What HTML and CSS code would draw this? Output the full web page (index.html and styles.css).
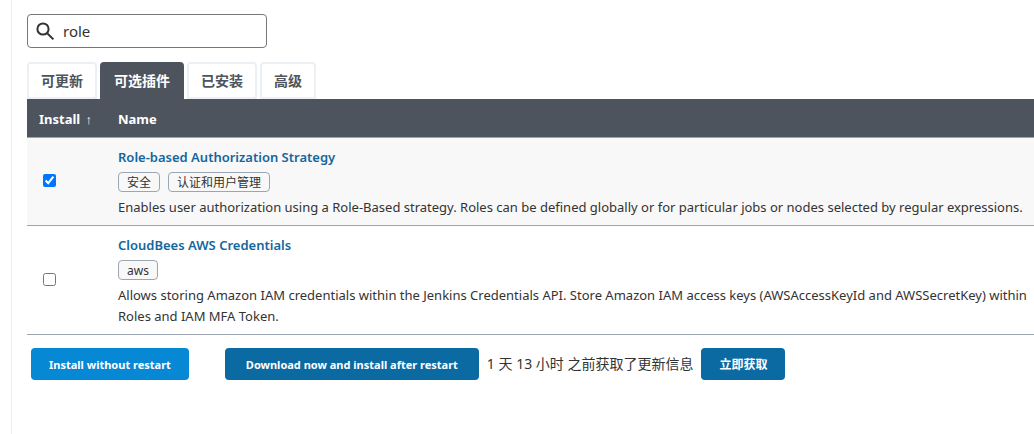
FILE: index.html
```html
<!doctype html>
<html lang="zh-CN">
<head>
	<meta charset="UTF-8">
	<title>插件管理</title>
	<link rel="stylesheet" href="styles.css">
</head>
<body>
	<div id="main-panel">
		<div class="search">
			<svg viewBox="0 0 20 20" width="20" height="20" aria-hidden="true">
				<circle cx="8" cy="8" r="5.6"></circle>
				<path d="M12.2 12.2L18.4 18.4"></path>
			</svg>
			<input type="text" id="filter-box" value="role" aria-label="搜索">
		</div>
		<div class="tabs">
			<a href="#updates">可更新</a>
			<a href="#available" class="active">可选插件</a>
			<a href="#installed">已安装</a>
			<a href="#advanced">高级</a>
		</div>
		<table id="plugins">
			<thead>
				<tr>
					<th class="check">Install <span class="arrow">↑</span></th>
					<th>Name</th>
				</tr>
			</thead>
			<tbody>
				<tr class="odd">
					<td class="check"><input type="checkbox" aria-labelledby="p1" checked></td>
					<td>
						<a class="title" id="p1" href="#role-strategy">Role-based Authorization Strategy</a>
						<div class="labels">
							<a href="#security">安全</a>
							<a href="#user">认证和用户管理</a>
						</div>
						<div class="excerpt">Enables user authorization using a Role-Based strategy. Roles can be defined globally or for particular jobs or nodes selected by regular expressions.</div>
					</td>
				</tr>
				<tr>
					<td class="check"><input type="checkbox" aria-labelledby="p2"></td>
					<td>
						<a class="title" id="p2" href="#aws-credentials">CloudBees AWS Credentials</a>
						<div class="labels">
							<a href="#aws">aws</a>
						</div>
						<div class="excerpt">Allows storing Amazon IAM credentials within the Jenkins Credentials API. Store Amazon IAM access keys (AWSAccessKeyId and AWSSecretKey) within<br>Roles and IAM MFA Token.</div>
					</td>
				</tr>
			</tbody>
		</table>
		<div class="bottom">
			<button type="button" class="primary">Install without restart</button>
			<button type="button" class="download">Download now and install after restart</button>
			<span class="info">1 天 13 小时 之前获取了更新信息</span>
			<button type="button" class="check-now">立即获取</button>
		</div>
	</div>
</body>
</html>
```

FILE: styles.css
```css
*{
	box-sizing: border-box;
}
body{
	margin: 0;
	background-color: #fff;
	color: #333;
	font-family: "Noto Sans", "Noto Sans CJK SC", sans-serif;
	font-size: 13px;
	line-height: 21px;
}
a{
	text-decoration: none;
}
#main-panel{
	min-height: 100vh;
	margin-left: 11px;
	padding: 14px 0 0 15px;
	border-left: 1px solid #eee;
	overflow: hidden;
}
.search{
	display: flex;
	align-items: center;
	width: 240px;
	height: 34px;
	padding: 0 7px;
	border: 1px solid #777;
	border-radius: 4px;
}
.search svg{
	flex: none;
	fill: none;
	stroke: #333;
	stroke-width: 2;
}
.search input{
	flex: 1;
	min-width: 0;
	margin-left: 8px;
	padding: 0;
	border: 0;
	outline: 0;
	background: none;
	color: #333;
	font-family: inherit;
	font-size: 15px;
}
.tabs{
	display: flex;
	gap: 3px;
	margin-top: 14px;
}
.tabs a{
	height: 37px;
	padding: 6px 12px;
	border: 2px solid #ebf0f4;
	border-radius: 4px 4px 0 0;
	color: #4d545d;
	font-size: 14px;
	font-weight: bold;
}
.tabs .active{
	border-color: #4d545d;
	background-color: #4d545d;
	color: #fff;
}
#plugins{
	width: 100%;
	border-spacing: 0;
}
#plugins th{
	height: 39px;
	padding: 2px 12px 0;
	border-bottom: 1px solid #9ba6b2;
	background-color: #4d545d;
	color: #fff;
	line-height: 20px;
	text-align: left;
	white-space: nowrap;
}
#plugins .arrow{
	margin-left: 2px;
	font-family: "Liberation Sans", sans-serif;
}
#plugins td{
	padding: 9px 0 7px 12px;
	border-bottom: 1px solid #9ba6b2;
}
#plugins .odd td{
	background-color: #f8f8f8;
}
#plugins .check{
	width: 79px;
	padding-right: 0;
}
#plugins td.check{
	padding: 0 0 2px 16px;
}
#plugins input{
	display: block;
	width: 13px;
	height: 13px;
	margin: 0;
}
.title{
	display: block;
	color: #14669e;
	font-weight: 600;
}
.labels{
	display: flex;
	gap: 8px;
	margin: 4px 0 5px;
}
.labels a{
	height: 20px;
	padding: 1px 8px 0;
	border: 1px solid #9ba6b2;
	border-radius: 4px;
	background-color: #f8f8f8;
	color: #333;
	font-size: 12px;
	line-height: 18px;
}
.excerpt{
	white-space: nowrap;
}
.bottom{
	display: flex;
	align-items: center;
	padding: 13px 4px;
}
.bottom button{
	height: 32px;
	padding: 0 18px;
	border: 0;
	border-radius: 4px;
	background-color: #0b6aa2;
	color: #fff;
	font-family: inherit;
	font-size: 11px;
	font-weight: bold;
}
.bottom .primary{
	margin-right: 36px;
	background-color: #0688d5;
}
.bottom .download{
	min-width: 254px;
}
.bottom .check-now{
	font-size: 12px;
}
.info{
	margin: 0 8px;
	padding-bottom: 2px;
	font-size: 14px;
}
```
